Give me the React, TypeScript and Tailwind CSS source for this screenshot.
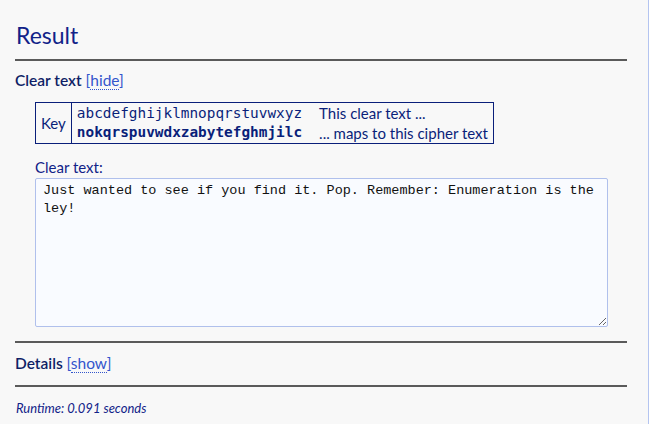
import React from 'react';

const sans = "font-['Lato','Liberation_Sans',sans-serif]";

const ToggleLink = ({ label }: { label: string }) => (
    <span className="font-normal text-[#3355cc]">
        [<span className="border-b border-dotted border-[#3355cc]">{label}</span>]
    </span>
);

export default function App() {
    return (
        <div className={`min-h-[424px] w-[649px] bg-[#f8f8f8] ${sans}`}>
            <div className="w-[649px] min-h-[424px] border-r border-[#b4c4f0] pl-[15px] pr-[21px] pt-[20px]">
                {/* ---------- RESULT HEADING ---------- */}
                <h1 className="text-[23px] leading-[30px] text-[#112288] pl-px">Result</h1>
                <hr className="mt-[9px] border-0 h-[2px] bg-[#5a5a5a]" />

                {/* ---------- CLEAR TEXT SECTION ---------- */}
                <div className="mt-[10px] text-[15.5px] leading-[18px] font-semibold text-[#0f1f66]">
                    Clear text <ToggleLink label="hide" />
                </div>

                <div className="ml-[20px] mt-[13px]">
                    <table className="border border-[#0a1f7a] text-[#0a1f7a] border-collapse">
                        <tbody>
                            <tr>
                                <td rowSpan={2} className="border border-[#0a1f7a] px-[5px] text-[15px]">Key</td>
                                <td className="pl-[5px] pt-[1px] font-['DejaVu_Sans_Mono',monospace] text-[14.4px] leading-[19px]">
                                    abcdefghijklmnopqrstuvwxyz
                                </td>
                                <td className="pl-[17px] pr-[5px] text-[15px] leading-[19px]">This clear text ...</td>
                            </tr>
                            <tr>
                                <td className="pl-[5px] pb-[1px] font-['DejaVu_Sans_Mono',monospace] font-bold text-[14.4px] leading-[19px]">
                                    nokqrspuvwdxzabytefghmjilc
                                </td>
                                <td className="pl-[17px] pr-[5px] text-[15px] leading-[19px]">... maps to this cipher text</td>
                            </tr>
                        </tbody>
                    </table>

                    <div className="mt-[14px] text-[15px] leading-[18px] text-[#112288]">Clear text:</div>
                    <textarea
                        readOnly
                        className="mt-[2px] block w-[573px] h-[149px] rounded-[2px] border border-[#b0c0ec] bg-[#f9fbff] px-[7px] py-[3px] font-['Liberation_Mono',monospace] text-[13.5px] leading-[18px] text-[#111] outline-none"
                        value="Just wanted to see if you find it. Pop. Remember: Enumeration is the ley!"
                    />
                </div>

                <hr className="mt-[14px] border-0 h-[2px] bg-[#5a5a5a]" />

                {/* ---------- DETAILS SECTION ---------- */}
                <div className="mt-[11px] text-[15.5px] leading-[18px] font-semibold text-[#0f1f66]">
                    Details <ToggleLink label="show" />
                </div>
                <hr className="mt-[13px] border-0 h-[2px] bg-[#5a5a5a]" />

                <div className="mt-[12px] pl-px text-[13px] italic text-[#112288]">Runtime: 0.091 seconds</div>
            </div>
        </div>
    );
}
